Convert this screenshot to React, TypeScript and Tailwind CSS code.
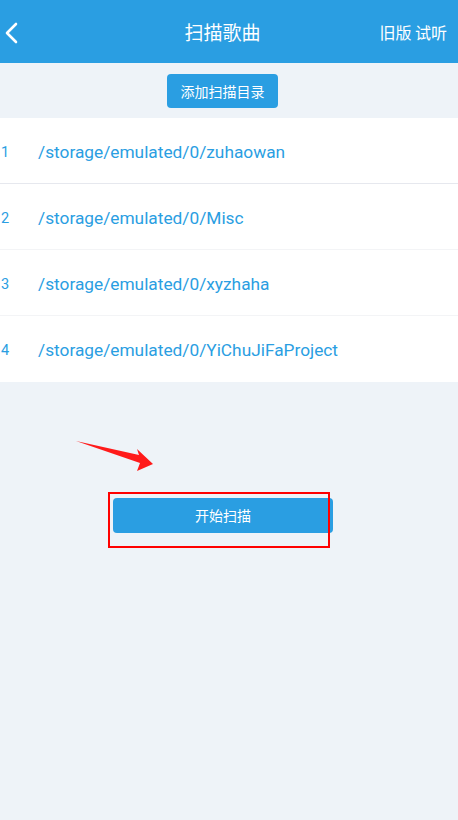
const dirs = [
  "/storage/emulated/0/zuhaowan",
  "/storage/emulated/0/Misc",
  "/storage/emulated/0/xyzhaha",
  "/storage/emulated/0/YiChuJiFaProject",
];

const cjk = "font-['Noto_Sans_CJK_SC','Noto_Sans',sans-serif]";

export default function App() {
  return (
    <main className={`relative min-h-[820px] w-[458px] bg-[#eef3f8] ${cjk}`}>
      <header className="relative flex h-[63px] items-center justify-center bg-[#2a9ee2] pr-[13px] text-white">
        <svg className="absolute left-[4px] top-[22px]" width="14" height="22" viewBox="0 0 14 22">
          <path d="M12 2 L3 11 L12 20" fill="none" stroke="white" strokeWidth="2.6" strokeLinecap="round" strokeLinejoin="round" />
        </svg>
        <h1 className="text-[19px] leading-none">扫描歌曲</h1>
        <div className="absolute right-[11px] top-[22px] text-[16px] leading-[20px]">旧版 试听</div>
      </header>

      <div className="flex justify-center pt-[11px] pb-[10px] pr-[13px]">
        <button className="h-[34px] w-[111px] rounded-[4px] bg-[#2a9ee2] text-[14px] text-white">
          添加扫描目录
        </button>
      </div>

      <ul className="bg-white font-['Roboto',sans-serif]">
        {dirs.map((d, i) => (
          <li
            key={d}
            className={`flex h-[66px] items-center pt-[4px] text-[#2a9ee2] ${i < dirs.length - 1 ? (i === 0 ? "border-b border-[#e6e8ee]" : "border-b border-[#f3f4f6]") : ""}`}
          >
            <span className="w-[38px] pl-[1px] text-[14.5px]">{i + 1}</span>
            <span className="text-[17.3px]">{d}</span>
          </li>
        ))}
      </ul>

      <svg className="absolute left-[70px] top-[436px]" width="90" height="40" viewBox="0 0 90 40">
        <polygon points="6,5 69,19 67,13 83,28 67,35 70,27" fill="#ff1a1a" />
      </svg>

      <div className="relative ml-[113px] mt-[116px] w-[220px]">
        <button className="h-[35px] w-[220px] rounded-[4px] bg-[#2a9ee2] text-[14px] text-white">
          开始扫描
        </button>
        <div className="absolute left-[-5px] top-[-6px] h-[56px] w-[222px] border-[2.5px] border-[#ff0000]" />
      </div>
    </main>
  );
}
